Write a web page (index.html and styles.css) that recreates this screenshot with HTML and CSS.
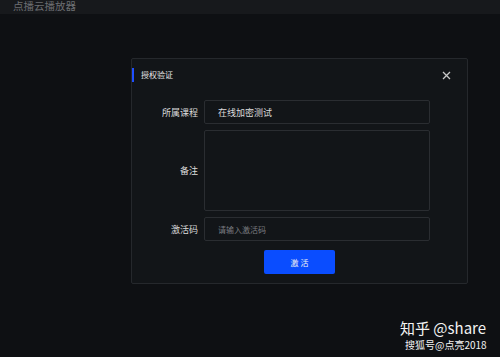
FILE: index.html
```html
<!DOCTYPE html>
<html lang="zh-CN">
<head>
    <meta charset="UTF-8">
    <meta name="viewport" content="width=device-width, initial-scale=1.0">
    <title>点播云播放器</title>
    <link rel="stylesheet" href="styles.css">
</head>
<body>
    <div class="topbar">点播云播放器</div>

    <div class="stage">
        <div class="dialog">
            <div class="dialog-head">
                <span class="dialog-title">授权验证</span>
                <span class="close">
                    <svg width="9" height="9" viewBox="0 0 9 9"><path d="M1 1L8 8M8 1L1 8" stroke="#c8c8c8" stroke-width="1.3" fill="none"/></svg>
                </span>
            </div>
            <div class="form">
                <div class="row">
                    <label class="label">所属课程</label>
                    <div class="field">在线加密测试</div>
                </div>
                <div class="row row-tall">
                    <label class="label">备注</label>
                    <textarea class="field area"></textarea>
                </div>
                <div class="row">
                    <label class="label">激活码</label>
                    <input class="field" type="text" placeholder="请输入激活码">
                </div>
                <div class="actions">
                    <button class="btn">激 活</button>
                </div>
            </div>
        </div>
    </div>

    <div class="mark">
        <div class="mark-big">知乎 @share</div>
        <div class="mark-small">搜狐号@点亮2018</div>
    </div>
</body>
</html>
```

FILE: styles.css
```css
html, body {
    margin: 0;
    height: 100%;
}
body {
    background: #0e1013;
    color: #e6e6e6;
    font-family: "Noto Sans CJK SC", "Noto Sans", sans-serif;
    font-size: 8px;
    position: relative;
    overflow: hidden;
}
.topbar {
    height: 14px;
    background: #17191c;
    color: #6c6e72;
    font-size: 10.5px;
    line-height: 12px;
    padding-left: 13px;
}
.stage {
    padding: 44px 0 0 131px;
}
.dialog {
    width: 335px;
    height: 224px;
    background: #121518;
    border: 1px solid #25282c;
    border-radius: 2px;
}
.dialog-head {
    display: flex;
    align-items: center;
    justify-content: space-between;
    height: 14px;
    margin-top: 9px;
    padding-right: 16px;
}
.dialog-title {
    border-left: 2px solid #1f4fff;
    padding-left: 7px;
    line-height: 14px;
    color: #e8e8e8;
}
.close {
    display: flex;
}
.form {
    margin-top: 18px;
    display: flex;
    flex-direction: column;
    gap: 6px;
}
.row {
    display: flex;
    align-items: center;
    height: 24px;
}
.row-tall {
    height: 81px;
}
.label {
    width: 66px;
    text-align: right;
    color: #dcdcdc;
    font-size: 9px;
}
.field {
    box-sizing: border-box;
    margin-left: 6px;
    width: 226px;
    height: 100%;
    background: #121518;
    border: 1px solid #2a2d31;
    border-radius: 2px;
    color: #dcdcdc;
    font-family: inherit;
    font-size: 9px;
    padding: 0 13px;
    display: flex;
    align-items: center;
    outline: 0;
}
.area {
    resize: none;
}
input.field {
    font-size: 8px;
}
.field::placeholder {
    color: #7a7c80;
}
.actions {
    display: flex;
    justify-content: center;
    margin-top: 3px;
}
.btn {
    width: 71px;
    height: 24px;
    background: #0a4dff;
    border: 0;
    border-radius: 2px;
    color: #f2f2f2;
    font-family: inherit;
    font-size: 8px;
}
.mark {
    position: absolute;
    left: 400px;
    top: 318px;
    color: #f4f4f4;
}
.mark-big {
    font-size: 15px;
    line-height: 19px;
}
.mark-small {
    font-size: 10px;
    line-height: 13px;
    margin-left: 5px;
    margin-top: 1px;
}
```
